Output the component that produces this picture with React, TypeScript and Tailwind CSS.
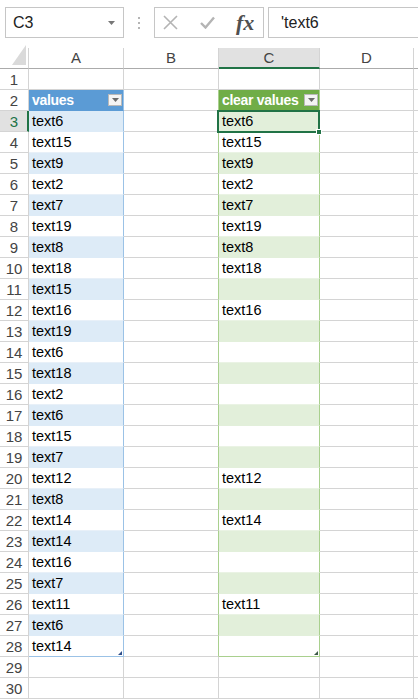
import { ChevronDown } from 'lucide-react';

const valuesA = [
    'text6', 'text15', 'text9', 'text2', 'text7', 'text19', 'text8', 'text18', 'text15', 'text16', 'text19', 'text6', 'text18',
    'text2', 'text6', 'text15', 'text7', 'text12', 'text8', 'text14', 'text14', 'text16', 'text7', 'text11', 'text6', 'text14',
];

const valuesC = [
    'text6', 'text15', 'text9', 'text2', 'text7', 'text19', 'text8', 'text18', '', 'text16', '', '', '',
    '', '', '', '', 'text12', '', 'text14', '', '', '', 'text11', '', '',
];

const rows = Array.from({ length: 30 }, (_, i) => i + 1);

const FilterButton = () => (
    <div className="ml-auto mr-[1px] w-[14px] h-[12px] shrink-0 bg-[#f4f4f4] border border-[#b9b9b9] flex items-center justify-center">
        <svg width="7" height="4" viewBox="0 0 7 4">
            <path d="M0 0h7L3.5 4z" fill="#6b6b6b" />
        </svg>
    </div>
);

const FormulaBar = () => (
    <div className="h-[48px] flex items-start pt-[7px] bg-white">
        <div className="ml-[5px] w-[119px] h-[31px] border border-[#c6c6c6] flex items-center pl-[7px] pr-[8px] text-[16px] text-[#222]">
            <span>C3</span>
            <svg className="ml-auto" width="7" height="4" viewBox="0 0 7 4">
                <path d="M0 0h7L3.5 4z" fill="#777" />
            </svg>
        </div>
        <div className="w-[30px] h-[31px] flex flex-col items-center justify-center gap-[3px]">
            <span className="w-[2px] h-[2px] bg-[#b5b5b5]" />
            <span className="w-[2px] h-[2px] bg-[#b5b5b5]" />
            <span className="w-[2px] h-[2px] bg-[#b5b5b5]" />
        </div>
        <div className="w-[110px] h-[31px] border border-[#c6c6c6] flex items-center pl-[8px] gap-[22px]">
            <svg width="15" height="15" viewBox="0 0 15 15">
                <path d="M1 1L14 14M14 1L1 14" stroke="#b4b4b4" strokeWidth="1.6" />
            </svg>
            <svg width="15" height="13" viewBox="0 0 15 13">
                <path d="M1 7L5.5 11.5L14 1.5" stroke="#b4b4b4" strokeWidth="2.4" fill="none" />
            </svg>
            <span className="-ml-[1px] text-[22px] leading-none italic font-bold text-[#505050]" style={{ fontFamily: '"Liberation Serif", serif' }}>fx</span>
        </div>
        <div className="ml-[4px] flex-1 h-[31px] border-y border-l border-[#c6c6c6] flex items-center pl-[12px] text-[16px] text-[#222]">
            'text6
        </div>
    </div>
);

const ColumnHeaders = () => (
    <div className="flex h-[21px] text-[15px] text-[#444] leading-[20px]">
        <div className="w-[29px] shrink-0 border-r border-b border-[#ababab] border-r-[#d4d4d4] flex items-end justify-end pr-[2px] pb-[3px]">
            <svg width="14" height="20" viewBox="0 0 14 20">
                <path d="M14 0V20H0z" fill="#dadada" />
            </svg>
        </div>
        <div className="w-[95px] shrink-0 border-r border-b border-[#d4d4d4] border-b-[#ababab] text-center">A</div>
        <div className="w-[95px] shrink-0 border-r border-b border-[#d4d4d4] border-b-[#ababab] text-center">B</div>
        <div className="w-[101px] shrink-0 border-r border-[#d4d4d4] border-b-2 border-b-[#217346] bg-[#e1e1e1] text-center">C</div>
        <div className="w-[94px] shrink-0 border-r border-b border-[#d4d4d4] border-b-[#ababab] text-center">D</div>
        <div className="flex-1 border-b border-[#ababab]" />
    </div>
);

export default function App() {
    return (
        <div className="w-[418px] h-[699px] overflow-hidden bg-white" style={{ fontFamily: '"Liberation Sans", Arial, sans-serif' }}>
            <FormulaBar />
            <ColumnHeaders />
            <div className="relative">
                {rows.map(r => {
                    const inTable = r >= 3 && r <= 28;
                    const band = inTable && r % 2 === 1;
                    const last = r === 28;
                    const a = inTable ? valuesA[r - 3] : '';
                    const c = inTable ? valuesC[r - 3] : '';

                    let aClass = 'border-[#d4d4d4]';
                    if (r === 2) aClass = 'bg-[#5b9bd5] border-[#5b9bd5] border-r-[#9bc2e6] text-white font-bold text-[14px] tracking-[-0.3px]';
                    else if (band) aClass = 'bg-[#ddebf7] border-[#ddebf7] border-r-[#9bc2e6]';
                    else if (last) aClass = 'border-[#9bc2e6]';
                    else if (inTable) aClass = 'border-[#e8f0f8] border-r-[#9bc2e6]';

                    let bClass = 'border-[#d4d4d4]';
                    if (r >= 2 && r <= 28) bClass = 'border-[#d4d4d4] border-r-[#a9d08e]';

                    let cClass = 'border-[#d4d4d4]';
                    if (r === 2) cClass = 'bg-[#70ad47] border-[#70ad47] border-r-[#a9d08e] text-white font-bold text-[14px] tracking-[-0.3px]';
                    else if (band) cClass = 'bg-[#e2efda] border-[#e2efda] border-r-[#a9d08e]';
                    else if (last) cClass = 'border-[#a9d08e]';
                    else if (inTable) cClass = 'border-[#eaf3e4] border-r-[#a9d08e]';

                    const active = r === 3;

                    return (
                        <div key={r} className="flex h-[21px] text-[14.5px] leading-[21px] text-black">
                            <div className={active
                                ? 'w-[29px] shrink-0 border-b border-[#d4d4d4] border-r-2 border-r-[#217346] bg-[#e1e1e1] text-center text-[#217346] text-[15px] pl-[1px]'
                                : 'w-[29px] shrink-0 border-r border-b border-[#d4d4d4] text-center text-[#444] text-[15px]'}>
                                {r}
                            </div>
                            <div className={`relative w-[95px] shrink-0 border-r border-b pl-[3px] flex items-center whitespace-nowrap ${aClass}`}>
                                <span>{r === 2 ? 'values' : a}</span>
                                {r === 2 && <FilterButton />}
                                {last && <span className="absolute right-[1px] bottom-[1px] w-0 h-0 border-l-[4px] border-l-transparent border-b-[4px] border-b-[#2f4e8a]" />}
                            </div>
                            <div className={`w-[95px] shrink-0 border-r border-b ${bClass}`} />
                            <div className={`relative w-[101px] shrink-0 border-r border-b pl-[3px] flex items-center whitespace-nowrap ${cClass}`}>
                                <span>{r === 2 ? 'clear values' : c}</span>
                                {r === 2 && <FilterButton />}
                                {last && <span className="absolute right-[1px] bottom-[1px] w-0 h-0 border-l-[4px] border-l-transparent border-b-[4px] border-b-[#3d5a47]" />}
                            </div>
                            <div className="w-[94px] shrink-0 border-r border-b border-[#d4d4d4]" />
                            <div className="flex-1 border-b border-[#d4d4d4]" />
                        </div>
                    );
                })}
                <div className="absolute left-[217px] top-[41px] w-[103px] h-[23px] border-2 border-[#217346] pointer-events-none">
                    <span className="absolute -right-[4px] -bottom-[4px] w-[6px] h-[6px] bg-[#217346] border border-white" />
                </div>
            </div>
        </div>
    );
}
